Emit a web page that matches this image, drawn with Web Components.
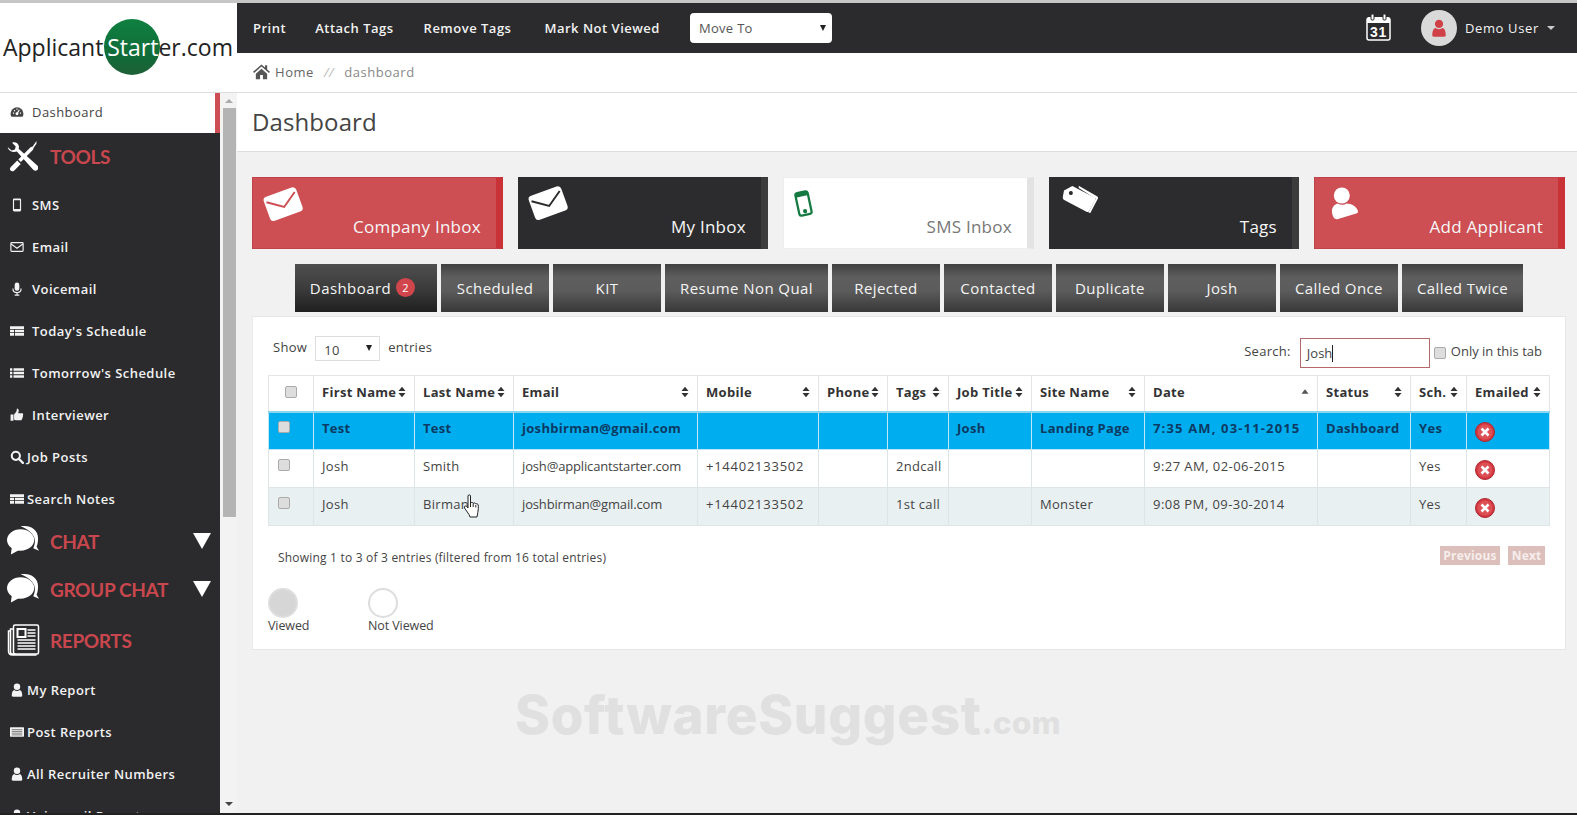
<!DOCTYPE html>
<html lang="en">
<head>
<meta charset="utf-8">
<title>Applicant Starter - Dashboard</title>
<style>
html, body { margin: 0; height: 100%; overflow: hidden; background: #f1f1f1; }
body { font-family: "Open Sans", "Liberation Sans", sans-serif; font-size: 13px; color: #444; }
</style>
</head>
<body>
<app-shell>
    <app-logo slot="logo"></app-logo>
    <side-bar slot="side">
        <nav-item icon="gauge" active>Dashboard</nav-item>
        <nav-heading icon="tools" height="51">TOOLS</nav-heading>
        <nav-item icon="mobile">SMS</nav-item>
        <nav-item icon="envelope">Email</nav-item>
        <nav-item icon="mic">Voicemail</nav-item>
        <nav-item icon="table">Today's Schedule</nav-item>
        <nav-item icon="list">Tomorrow's Schedule</nav-item>
        <nav-item icon="thumb">Interviewer</nav-item>
        <nav-item icon="search" tight>Job Posts</nav-item>
        <nav-item icon="table" tight>Search Notes</nav-item>
        <nav-heading icon="chat" height="48" caret>CHAT</nav-heading>
        <nav-heading icon="chat" height="48" caret>GROUP CHAT</nav-heading>
        <nav-heading icon="news" height="53">REPORTS</nav-heading>
        <nav-item icon="user" tight>My Report</nav-item>
        <nav-item icon="card" tight>Post Reports</nav-item>
        <nav-item icon="user" tight>All Recruiter Numbers</nav-item>
        <nav-item icon="user" tight>Voicemail Reports</nav-item>
    </side-bar>
    <top-bar slot="top"></top-bar>
    <bread-crumb slot="main"></bread-crumb>
    <page-title slot="main">Dashboard</page-title>
    <page-content slot="main">
        <card-row>
            <dash-card kind="red" icon="envelope">Company Inbox</dash-card>
            <dash-card kind="dark" icon="envelope">My Inbox</dash-card>
            <dash-card kind="light" icon="phone">SMS Inbox</dash-card>
            <dash-card kind="dark" icon="tags">Tags</dash-card>
            <dash-card kind="red" icon="user">Add Applicant</dash-card>
        </card-row>
        <tab-row>
            <tab-button active badge="2">Dashboard</tab-button>
            <tab-button>Scheduled</tab-button>
            <tab-button>KIT</tab-button>
            <tab-button>Resume Non Qual</tab-button>
            <tab-button>Rejected</tab-button>
            <tab-button>Contacted</tab-button>
            <tab-button>Duplicate</tab-button>
            <tab-button>Josh</tab-button>
            <tab-button>Called Once</tab-button>
            <tab-button>Called Twice</tab-button>
        </tab-row>
        <data-panel></data-panel>
    </page-content>
</app-shell>

<script>
"use strict";
// iconos sencillos, todos en un viewBox de 24 salvo los grandes
const ICONOS = {
    gauge: '<path fill="currentColor" d="M12 4a11 11 0 0 0-11 11c0 2 .6 3.800 1.500 5h19c.9-1.200 1.500-3 1.500-5A11 11 0 0 0 12 4z"/><circle cx="12" cy="15" r="2.500" fill="#fff"/><path stroke="#fff" stroke-width="2" d="M12 15l4-7M5 14h2M7 9l1.500 1.500M12 6v2M19 14h-2"/>',
    mobile: '<path fill="currentColor" fill-rule="evenodd" d="M7 1h10a2 2 0 0 1 2 2v18a2 2 0 0 1-2 2H7a2 2 0 0 1-2-2V3a2 2 0 0 1 2-2zm0 3v15h10V4z"/>',
    envelope: '<rect x="1.500" y="4.500" width="21" height="15" rx="1.500" fill="none" stroke="currentColor" stroke-width="2"/><path d="M2 7l10 7 10-7" fill="none" stroke="currentColor" stroke-width="2"/>',
    mic: '<rect x="8" y="1" width="8" height="14" rx="4" fill="currentColor"/><path d="M5 11c0 4 3 7 7 7s7-3 7-7M12 18v4M8 22.500h8" fill="none" stroke="currentColor" stroke-width="2"/>',
    table: '<path fill="currentColor" d="M0 4h24v4.500H0zM0 10h7v4H0zM8.500 10H24v4H8.500zM0 15.500h7V20H0zM8.500 15.500H24V20H8.500z"/>',
    list: '<path fill="currentColor" d="M0 4h4v4H0zM6 4h18v4H6zM0 10h4v4H0zM6 10h18v4H6zM0 16h4v4H0zM6 16h18v4H6z"/>',
    thumb: '<path fill="currentColor" d="M1 11h5v11H1zM7 11l4-5 1-5c2 0 3 2 3 4l-1 4h7c2 0 2 3 1 3.500.8 1 .5 2.500-.5 3 .5 1 0 2.500-1 2.800.3 1.200-.5 2.700-2 2.700H11c-2 0-3-1-4-1z"/>',
    search: '<circle cx="10" cy="10" r="7" fill="none" stroke="currentColor" stroke-width="3.500"/><path d="M15 15l7 7" stroke="currentColor" stroke-width="4" stroke-linecap="round"/>',
    user: '<circle cx="12" cy="6.500" r="5.500" fill="currentColor"/><path fill="currentColor" d="M3 22c0-6 1.500-9 4-10 1.500 1 3 1.500 5 1.500s3.500-.5 5-1.500c2.500 1 4 4 4 10 0 1-1 1.500-2 1.500H5c-1 0-2-.5-2-1.500z"/>',
    bigUser: '<circle cx="10" cy="8" r="7.500" fill="currentColor"/><path fill="currentColor" d="M1 25c-1-5 1-8 5-9.500 3 1.500 6 1.500 8.500 0 5 0 9 3 10.500 6.500 .5 1.500 0 2.500-1.500 3l-17 5C3.500 31 1.500 29 1 25z"/>',
    card: '<rect y="4" width="24" height="16" rx="1" fill="currentColor"/><path stroke="#2b2b2d" d="M3 8h18M3 11h18M3 14h18M3 17h18"/>',
    tools: '<path fill="currentColor" d="M2 6.500l3.800 3.300 3-.8.8-3L6.200 2.600c2.700-1.200 5.700.2 6.300 3 .2.900.1 1.800-.2 2.600l17.500 15.700c1.300 1.200 1.200 2.900.2 4-1.100 1.100-2.900 1.100-4-.1L10.600 10.700C7 12 2.900 10.400 2 6.500z" transform="scale(.8)"/><path fill="currentColor" d="M29 1l-3.500 5.200-2 .6L12 18.200l2.400 2.400L25.800 9.200l.6-2L29 3.500z M11 19.200L5 25.200c-1 1-1.200 2.500-.2 3.500 1 1 2.500.8 3.500-.2l6-6z" transform="scale(.8)"/>',
    chat: '<path fill="currentColor" d="M14 1c9-2 18 3 18 12 0 4-.6 7-1.500 9l2.500 4-6-2.500c1.500-3 2.500-7 1-11C26.500 8 21 3 14 1z"/><ellipse cx="14" cy="15" rx="14" ry="11" fill="currentColor"/><path fill="currentColor" d="M5 22l-1 8 9-5z"/>',
    news: '<g fill="none" stroke="currentColor" stroke-width="1.500"><rect x="6" y="1" width="25" height="29" rx="1.500"/><path d="M6 5H3v23c0 1 1 2 2 2h3M3 7H1v20c0 2 1 4 4 4h24"/></g><rect x="10" y="5" width="8" height="8" fill="none" stroke="currentColor" stroke-width="2"/><path stroke="currentColor" stroke-width="1.500" d="M20 6h8M20 9h8M20 12h8M10 16h18M10 19h18M10 22h18M10 25h18"/>',
    home: '<path fill="currentColor" d="M12 2L0 12.500l1.500 1.700L12 5l10.500 9.200 1.500-1.700-4-3.500V3h-3v3.300zM4 15v8h6v-6h4v6h6v-8l-8-7z"/>',
    phone: '<g transform="rotate(-12 12 12)"><rect x="6" y="1" width="12" height="22" rx="2" fill="none" stroke="#147a42" stroke-width="2.200"/><rect x="6" y="1" width="12" height="4" rx="1" fill="#147a42"/><circle cx="12" cy="19.500" r="2" fill="#147a42"/></g>',
    tags: '<path fill="currentColor" d="M1 9l6.500-5.500L29 9.500c1 .3 1.500 1 1.200 2l-3.500 11c-.3 1-1 1.200-2 .9L3 17.300c-1-.3-1.800-1.300-1.800-2.300z"/><circle cx="7.500" cy="10" r="1.800" fill="var(--fondo)"/><path fill="currentColor" d="M13 2l18 6c1 .4 1.500 1 1.200 2l-4 14-1.800-.5 4-13.200L13.500 4z"/>'
};
const icono = (nombre, w, h, vb) =>
    `<svg width="${w}" height="${h}" viewBox="${vb || '0 0 24 24'}" aria-hidden="true">${ICONOS[nombre]}</svg>`;

class AppShell extends HTMLElement {
    constructor() {
        super();
        this.attachShadow({ mode: "open" }).innerHTML = `
        <style>
            :host { display: grid; grid-template-columns: 237px 1fr; grid-template-rows: 50px 1fr; box-sizing: border-box;
                height: 815px; border-top: 3px solid #c6c6c6; border-bottom: 2px solid #222; overflow: hidden; position: relative; }
            #izq { grid-row: 1 / 3; display: flex; flex-direction: column; min-height: 0; }
            #der { display: flex; flex-direction: column; min-height: 0; }
            #marca { position: absolute; left: 515px; top: 677px; font: 800 53px/70px Inter, sans-serif; color: #e0e0e0; letter-spacing: .65px; white-space: nowrap; }
            #marca small { font-size: 31px; letter-spacing: .5px; }
            #mano { position: absolute; left: 463px; top: 491px; }
        </style>
        <div id="izq"><slot name="logo"></slot><slot name="side"></slot></div>
        <slot name="top"></slot>
        <div id="der"><slot name="main"></slot></div>
        <div id="marca">SoftwareSuggest<small>.com</small></div>
        <svg id="mano" width="18" height="24" viewBox="0 0 18 24"><path fill="#fff" stroke="#222" stroke-width="1" d="M5 2c0-1.500 2.500-1.500 2.500 0v7c1-.8 2.300-.7 2.700.3 1-.6 2.200-.4 2.600.6 1-.4 2.200 0 2.400 1.100.3 2 .2 5-.4 7.500L14 23H7l-1-2.500-4.500-6.500c-.9-1.500 1-2.800 2.200-1.500L5 14z"/><path stroke="#222" fill="none" d="M7.500 9v4M10.200 9.500V13M12.800 11v2.500"/></svg>`;
    }
}
customElements.define("app-shell", AppShell);

class AppLogo extends HTMLElement {
    constructor() {
        super();
        this.attachShadow({ mode: "open" }).innerHTML = `
        <style>
            :host { display: flex; align-items: center; height: 90px; background: #fff; padding-left: 3px; box-sizing: border-box; border-bottom: 1px solid #ddd;
                font: 23px/1 "Open Sans", sans-serif; color: #222; flex: none; white-space: nowrap; }
            b { font-weight: 400; position: relative; color: #fff; z-index: 0; }
            b::before { content: ""; position: absolute; left: -3px; top: -12px; width: 56px; height: 56px; border-radius: 50%;
                background: linear-gradient(#0f8040, #116a38 70%, #1f5f37); z-index: -1; }
        </style>
        <span>Applicant&thinsp;<b>Start</b>er.com</span>`;
    }
}
customElements.define("app-logo", AppLogo);

class SideBar extends HTMLElement {
    constructor() {
        super();
        this.attachShadow({ mode: "open" }).innerHTML = `
        <style>
            :host { display: flex; flex: 1; min-height: 0; background: #fbfbfb; }
            #menu { width: 220px; background: #2b2b2d; overflow: hidden; }
            #barra { width: 17px; display: flex; flex-direction: column; align-items: center; background: #f3f3f3; }
            #pulgar { width: 13px; height: 409px; background: #b4b4b4; margin-left: 1px; }
            .flecha { height: 15px; flex: none; display: flex; align-items: center; justify-content: center; }
            .flecha i { border: 4px solid transparent; }
            #arriba i { border-bottom-color: #aaa; border-top-width: 0; }
            #abajo { margin-top: auto; margin-bottom: 2px; }
            #abajo i { border-top-color: #444; border-bottom-width: 0; }
        </style>
        <div id="menu"><slot></slot></div>
        <div id="barra"><div class="flecha" id="arriba"><i></i></div><div id="pulgar"></div><div class="flecha" id="abajo"><i></i></div></div>`;
    }
}
customElements.define("side-bar", SideBar);

class NavItem extends HTMLElement {
    constructor() {
        super();
        this.attachShadow({ mode: "open" });
    }
    connectedCallback() {
        const nombre = this.getAttribute("icon");
        const tight = this.hasAttribute("tight");
        this.shadowRoot.innerHTML = `
        <style>
            :host { display: flex; align-items: center; height: 42px; box-sizing: border-box; padding-left: 10px;
                color: #f2f2f2; font: 600 13px "Open Sans", sans-serif; letter-spacing: .45px; white-space: nowrap; overflow: hidden; }
            :host([active]) { height: 40px; background: #fff; color: #444; font-weight: 400; border-right: 5px solid #cd4e53; padding-bottom: 2px; }
            #ic { width: 14px; margin-right: ${tight ? 3 : 8}px; display: flex; justify-content: center; flex: none; }
        </style>
        <span id="ic">${icono(nombre, 14, 14)}</span><slot></slot>`;
    }
}
customElements.define("nav-item", NavItem);

class NavHeading extends HTMLElement {
    constructor() {
        super();
        this.attachShadow({ mode: "open" });
    }
    connectedCallback() {
        const nombre = this.getAttribute("icon");
        const caret = this.hasAttribute("caret");
        const vb = nombre == "news" ? "0 0 32 32" : (nombre == "chat" ? "0 0 34 32" : "0 0 24 24");
        this.shadowRoot.innerHTML = `
        <style>
            :host { display: flex; align-items: center; height: ${this.getAttribute("height")}px; box-sizing: border-box; padding: 0 0 4px 7px;
                color: #c8474e; font: 700 19px Lato, sans-serif; letter-spacing: -.35px; white-space: nowrap; }
            :host([icon="chat"]) { padding-bottom: 6px; }
            :host([icon="tools"]) #ic { margin-left: -2px; margin-right: 12px; }
            #ic { width: 33px; height: 33px; margin-right: 10px; color: #fff; flex: none; display: block; }
            #ic svg { display: block; }
            #tri { margin-left: auto; margin-right: 9px; width: 0; height: 0; border: 9px solid transparent; border-top: 16px solid #fff; border-bottom: 0; }
        </style>
        <span id="ic">${icono(nombre, 33, 32, vb)}</span><slot></slot>${caret ? '<span id="tri"></span>' : ''}`;
    }
}
customElements.define("nav-heading", NavHeading);

class TopBar extends HTMLElement {
    constructor() {
        super();
        this.attachShadow({ mode: "open" }).innerHTML = `
        <style>
            :host { display: flex; align-items: center; background: #2b2b2d; color: #f2f2f2; padding-left: 16px;
                font: 600 13px "Open Sans", sans-serif; letter-spacing: .5px; white-space: nowrap; }
            a { margin-right: 30px; }
            a:nth-of-type(1) { margin-right: 29px; }
            a:nth-of-type(3) { margin-right: 33px; }
            #mover { width: 142px; height: 30px; box-sizing: border-box; background: #fff; border-radius: 4px; color: #555; font-weight: 400;
                display: flex; align-items: center; justify-content: space-between; padding: 0 6px 0 9px; letter-spacing: .3px; }
            #mover i { border: 3.500px solid transparent; border-top: 6px solid #222; border-bottom: 0; }
            #der { margin-left: auto; display: flex; align-items: center; padding-right: 24px; font-weight: 400; letter-spacing: .65px; }
            #cal { margin: -2px 30px 0 0; display: block; }
            #ava { width: 36px; height: 36px; border-radius: 50%; background: #d9d9d9; color: #cf4147; display: flex; align-items: center; justify-content: center; margin-right: 8px; }
            #car { margin-left: 8px; border: 4px solid transparent; border-top: 4px solid #ccc; border-bottom: 0; }
        </style>
        <a>Print</a><a>Attach Tags</a><a>Remove Tags</a><a>Mark Not Viewed</a>
        <div id="mover">Move To<i></i></div>
        <div id="der">
            <svg id="cal" width="25" height="27" viewBox="0 0 25 27">
                <rect x="1" y="4" width="23" height="22" rx="2" fill="none" stroke="#fff" stroke-width="1.500"/>
                <path d="M1 5c0-1 1-2 2-2h19c1 0 2 1 2 2v4H1z" fill="#fff"/>
                <rect x="5" y="0" width="3" height="6" rx="1" fill="#fff" stroke="#2b2b2d"/><rect x="17" y="0" width="3" height="6" rx="1" fill="#fff" stroke="#2b2b2d"/>
                <text x="12.500" y="23" text-anchor="middle" fill="#fff" font-family="Liberation Sans" font-weight="700" font-size="14">31</text>
            </svg>
            <div id="ava">${icono("user", 18, 22)}</div>
            <span>Demo User</span><i id="car"></i>
        </div>`;
    }
}
customElements.define("top-bar", TopBar);

class BreadCrumb extends HTMLElement {
    constructor() {
        super();
        this.attachShadow({ mode: "open" }).innerHTML = `
        <style>
            :host { display: flex; align-items: center; height: 39px; box-sizing: content-box; background: #fff; border-bottom: 1px solid #ddd; padding-left: 16px; color: #666; letter-spacing: .55px;
                font: 13px "Open Sans", sans-serif; flex: none; }
            #in { display: flex; align-items: center; margin-top: -2px; }
            svg { color: #555; margin-right: 5px; }
            i { color: #bbb; margin: 0 10px; }
            span { color: #888; }
        </style>
        <div id="in">${icono("home", 17, 17)}Home<i>//</i><span>dashboard</span></div>`;
    }
}
customElements.define("bread-crumb", BreadCrumb);

class PageTitle extends HTMLElement {
    constructor() {
        super();
        this.attachShadow({ mode: "open" }).innerHTML = `
        <style>
            :host { display: flex; align-items: center; height: 59px; box-sizing: border-box; background: #fff; border-bottom: 1px solid #ddd; padding: 0 0 2px 15px;
                font: 400 24px "Open Sans", sans-serif; color: #444; flex: none; letter-spacing: .1px; }
        </style><slot></slot>`;
    }
}
customElements.define("page-title", PageTitle);

class PageContent extends HTMLElement {
    constructor() {
        super();
        this.attachShadow({ mode: "open" }).innerHTML = `
        <style>
            :host { display: block; padding: 25px 13px 0 15px; background: #f1f1f1; flex: 1; }
        </style><slot></slot>`;
    }
}
customElements.define("page-content", PageContent);

class CardRow extends HTMLElement {
    constructor() {
        super();
        this.attachShadow({ mode: "open" }).innerHTML = `
        <style>:host { display: flex; gap: 15.200px; margin: 0 1px 15px 0; }</style><slot></slot>`;
    }
}
customElements.define("card-row", CardRow);

class DashCard extends HTMLElement {
    constructor() {
        super();
        this.attachShadow({ mode: "open" });
    }
    connectedCallback() {
        const nombre = this.getAttribute("icon");
        let svg;
        if (nombre == "phone") svg = icono("phone", 25, 27);
        else if (nombre == "user") svg = icono("bigUser", 28, 33, "0 0 26 31");
        else if (nombre == "tags") svg = icono("tags", 38, 29, "0 0 34 26");
        else svg = icono("envelope", 36, 36);
        this.shadowRoot.innerHTML = `
        <style>
            :host { flex: 1; height: 72px; box-sizing: border-box; display: flex; position: relative; color: #f7f7f7; --fondo: #2c2c2e; background: var(--fondo);
                font: 17px "Open Sans", sans-serif; letter-spacing: .25px; border-right: 7px solid #3c3c3c; align-items: flex-end; justify-content: flex-end; padding: 0 15px 11px 0; }
            :host([kind="red"]) { --fondo: #cd4e53; border: 1px solid #c2424a; border-right: 7px solid #c93237; padding-bottom: 10px; }
            :host([kind="light"]) { --fondo: #fff; color: #777; border: 1px solid #eee; border-right: 7px solid #e3e3e3; padding-bottom: 10px; }
            #ic { position: absolute; left: 13px; top: 8px; transform: rotate(-20deg); color: #fff; }
            :host([icon="phone"]) #ic { left: 7px; top: 12px; transform: none; }
            :host([icon="user"]) #ic { left: 16px; top: 9px; transform: none; }
            :host([icon="tags"]) #ic { left: 12px; top: 7px; transform: rotate(12deg); }
            :host([icon="envelope"]) svg rect { fill: currentColor; }
            :host([icon="envelope"]) svg path { stroke: var(--fondo); stroke-width: 1.300; }
        </style>
        <span id="ic">${svg}</span><slot></slot>`;
    }
}
customElements.define("dash-card", DashCard);

class TabRow extends HTMLElement {
    constructor() {
        super();
        this.attachShadow({ mode: "open" }).innerHTML = `
        <style>:host { display: flex; justify-content: center; gap: 4px; margin-bottom: 4px; }</style><slot></slot>`;
    }
}
customElements.define("tab-row", TabRow);

class TabButton extends HTMLElement {
    constructor() {
        super();
        this.attachShadow({ mode: "open" });
    }
    connectedCallback() {
        const badge = this.getAttribute("badge");
        this.shadowRoot.innerHTML = `
        <style>
            :host { display: flex; align-items: center; justify-content: center; gap: 5px; height: 48px; min-width: 108px; box-sizing: border-box; padding: 0 15px;
                color: #f4f4f4; font: 15px "Open Sans", sans-serif; letter-spacing: .42px; white-space: nowrap;
                background: linear-gradient(#414141, #5e5e5e 28%, #5c5c5c 55%, #444 85%, #383838); }
            :host([active]) { background: linear-gradient(#4f4f4f, #3c3c3c 50%, #1f1f1f); }
            b { width: 19px; height: 19px; border-radius: 50%; background: #d1454c; color: #fff; font: 11px/19px "Open Sans", sans-serif; text-align: center; margin: -2px 7px 0 0; }
        </style>
        <slot></slot>${badge ? `<b>${badge}</b>` : ''}`;
    }
}
customElements.define("tab-button", TabButton);

const COLUMNAS = [
    ["First Name", 101], ["Last Name", 99], ["Email", 184], ["Mobile", 121], ["Phone", 69], ["Tags", 61],
    ["Job Title", 83], ["Site Name", 113], ["Date", 173], ["Status", 93], ["Sch.", 56], ["Emailed", 83]
];
const FILAS = [
    ["Test", "Test", "joshbirman@gmail.com", "", "", "", "Josh", "Landing Page", "7:35 AM, 03-11-2015", "Dashboard", "Yes"],
    ["Josh", "Smith", "josh@applicantstarter.com", "+14402133502", "", "2ndcall", "", "", "9:27 AM, 02-06-2015", "", "Yes"],
    ["Josh", "Birman", "joshbirman@gmail.com", "+14402133502", "", "1st call", "", "Monster", "9:08 PM, 09-30-2014", "", "Yes"]
];
const ORDEN = `<svg class="orden" width="8" height="12" viewBox="0 0 9 12"><path fill="#333" d="M4.500 0L8.500 5H.5zM4.500 12L.5 7h8z"/></svg>`;
const ORDEN_ASC = `<svg class="orden" width="8" height="12" viewBox="0 0 9 12"><path fill="#555" d="M4.500 3L8.500 8H.5z"/></svg>`;
const BORRAR = `<svg class="x" width="20" height="20" viewBox="0 0 20 20"><circle cx="10" cy="10" r="9.500" fill="#d5373f" stroke="#a92a31"/><circle cx="10" cy="10" r="7.500" fill="#dc5056"/><path stroke="#fff" stroke-width="2.600" d="M6.500 6.500l7 7M13.500 6.500l-7 7"/></svg>`;

class DataPanel extends HTMLElement {
    constructor() {
        super();
        const cols = COLUMNAS.map(c => `<col style="width:${c[1]}px">`).join("");
        const cabecera = COLUMNAS.map(c =>
            `<th><div class="th">${c[0]}${c[0] == "Date" ? ORDEN_ASC : ORDEN}</div></th>`).join("");
        const filas = FILAS.map(f =>
            `<tr><td class="chk"><input type="checkbox"></td>${f.map((v, i) => `<td class="c${i}">${v}</td>`).join("")}<td class="bor">${BORRAR}</td></tr>`).join("");
        this.attachShadow({ mode: "open" }).innerHTML = `
        <style>
            :host { display: block; height: 334px; box-sizing: border-box; background: #fff; border: 1px solid #e6e6e6; border-left-color: #eaeaea; padding: 19px 15px 0; color: #444;
                font: 13px "Open Sans", sans-serif; letter-spacing: .3px; }
            #barra { display: flex; justify-content: space-between; align-items: flex-start; height: 39px; padding: 0 8px 0 5px; }
            .grupo { display: flex; align-items: center; gap: 8px; }
            .grupo > span { margin-top: -4px; }
            #largo { width: 65px; height: 25px; box-sizing: border-box; border: 1px solid #ddd; display: flex; align-items: center; justify-content: space-between; padding: 2px 7px 0 8px; }
            #largo i { border: 3.500px solid transparent; border-top: 6px solid #222; border-bottom: 0; margin-top: -3px; }
            #buscar { margin-top: 2px; gap: 0; }
            #caja { width: 130px; height: 30px; box-sizing: border-box; border: 1px solid #b5686c; margin: 0 4px 0 9px; padding: 0 6px; display: flex; align-items: center; color: #444; letter-spacing: 0; }
            #caja i { width: 1px; height: 17px; background: #222; }
            input { appearance: none; -webkit-appearance: none; width: 12px; height: 12px; margin: 0; border: 1px solid #aaa; border-radius: 2px; background: #ddd; display: block; }
            #solo { margin-left: 5px; letter-spacing: 0; }
            table { border-collapse: collapse; table-layout: fixed; width: 1281px; }
            th { height: 36px; padding: 0 8px 2px; box-sizing: border-box; text-align: left; font-weight: 700; color: #333; border: 1px solid #e2e6e8; border-bottom: 2px solid #8dd5ee; background: #fff; }
            .th { display: flex; align-items: center; justify-content: space-between; white-space: nowrap; }
            th.chk input { margin: -1px auto 0; }
            td { height: 38px; box-sizing: border-box; padding: 0 8px 5px; border: 1px solid #dfe5e7; white-space: nowrap; overflow: hidden; }
            td.chk input { margin: -2px 0 0 1px; }
            td.bor { padding: 2px 8px 0; }
            td.c2 { letter-spacing: -.15px; }
            td.c3 { letter-spacing: .75px; }
            td.c8 { letter-spacing: .45px; }
            .x { display: block; }
            tbody tr:nth-child(1) td { background: #00aeef; color: #0c3a63; font-weight: 700; border-color: #bfe6f5; }
            tbody tr:nth-child(1) td.c2 { letter-spacing: .3px; }
            tbody tr:nth-child(1) td.c8 { letter-spacing: 1.150px; }
            tbody tr:nth-child(3) td { background: #e9f0f2; }
            #pie { display: flex; justify-content: space-between; align-items: center; margin-top: 20px; height: 19px; padding: 0 5px 0 10px; font-size: 12px; letter-spacing: .2px; }
            #pie > span { margin-top: 3px; }
            #pag { display: flex; gap: 8px; }
            #pag b { background: #dcbfba; color: #f6eeec; font: 700 12px/19px "Open Sans", sans-serif; padding: 0 3.500px; height: 19px; }
            #leyenda { display: flex; margin-top: 23px; letter-spacing: -.1px; font-size: 12.500px; }
            #leyenda div { width: 100px; }
            #leyenda i { display: block; width: 30px; height: 30px; box-sizing: border-box; border-radius: 50%; border: 2px solid #ddd; margin-bottom: -1px; }
            #leyenda .v i { background: #d6d6d6; }
        </style>
        <div id="barra">
            <div class="grupo"><span>Show</span><div id="largo">10<i></i></div><span>entries</span></div>
            <div class="grupo" id="buscar"><span>Search:</span><div id="caja">Josh<i></i></div><input type="checkbox"><span id="solo">Only in this tab</span></div>
        </div>
        <table>
            <colgroup><col style="width:45px">${cols}</colgroup>
            <thead><tr><th class="chk"><input type="checkbox"></th>${cabecera}</tr></thead>
            <tbody>${filas}</tbody>
        </table>
        <div id="pie"><span>Showing 1 to 3 of 3 entries (filtered from 16 total entries)</span><div id="pag"><b>Previous</b><b>Next</b></div></div>
        <div id="leyenda"><div class="v"><i></i>Viewed</div><div><i></i>Not Viewed</div></div>`;
    }
}
customElements.define("data-panel", DataPanel);
</script>
</body>
</html>
